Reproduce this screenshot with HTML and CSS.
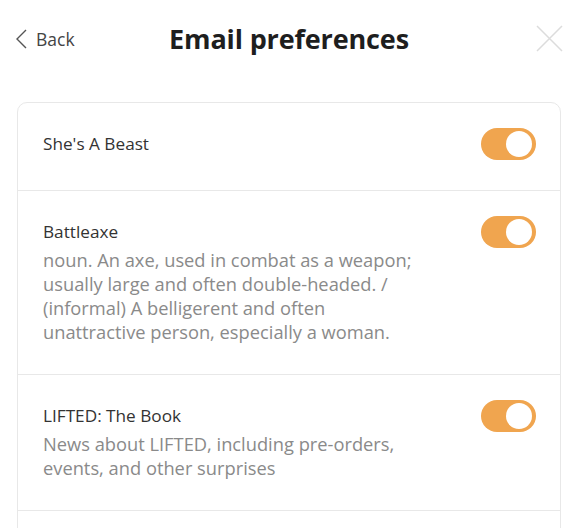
FILE: index.html
```html
<!DOCTYPE html>
<html>
<head>
<meta charset="utf-8">
<link rel="stylesheet" href="styles.css">
</head>
<body>
<div class="page">
  <header class="header">
    <a class="back">
      <svg class="chev" width="12" height="20" viewBox="0 0 12 20"><path d="M11 1 L2 10 L11 19" fill="none" stroke="#555" stroke-width="1.4"/></svg>
      <span>Back</span>
    </a>
    <h1 class="title">Email preferences</h1>
    <svg class="close" width="27" height="27" viewBox="0 0 27 27"><path d="M1 1 L26 26 M26 1 L1 26" fill="none" stroke="#dcdcdc" stroke-width="1.5"/></svg>
  </header>
  <div class="card">
    <div class="row">
      <div class="text">
        <div class="name">She's A Beast</div>
      </div>
      <span class="toggle"><span class="knob"></span></span>
    </div>
    <div class="row">
      <div class="text">
        <div class="name">Battleaxe</div>
        <div class="desc">noun. An axe, used in combat as a weapon; usually large and often double-headed. / (informal) A belligerent and often unattractive person, especially a woman.</div>
      </div>
      <span class="toggle"><span class="knob"></span></span>
    </div>
    <div class="row">
      <div class="text">
        <div class="name">LIFTED: The Book</div>
        <div class="desc">News about LIFTED, including pre-orders, events, and other surprises</div>
      </div>
      <span class="toggle"><span class="knob"></span></span>
    </div>
    <div class="row row-empty"></div>
  </div>
</div>
</body>
</html>
```

FILE: styles.css
```css
html, body {
  margin: 0;
  padding: 0;
  background: #fff;
  font-family: "Open Sans", "Noto Sans", sans-serif;
  overflow: hidden;
}
.page {
  padding: 0 17px;
}
.header {
  height: 76px;
  display: flex;
  align-items: center;
  justify-content: space-between;
  position: relative;
}
.back {
  display: flex;
  align-items: center;
  gap: 9px;
  color: #444;
  font-size: 17.5px;
  margin-left: -2px;
  margin-top: 2px;
}
.title {
  position: absolute;
  left: 0;
  right: 0;
  text-align: center;
  margin: 0;
  font-size: 27px;
  font-weight: 700;
  color: #1e1e1e;
  letter-spacing: -0.15px;
  pointer-events: none;
}
.close {
  margin-right: -2px;
}
.card {
  margin-top: 26px;
  border: 1px solid #e8e8e8;
  border-radius: 10px;
}
.row {
  display: flex;
  justify-content: space-between;
  align-items: flex-start;
  padding: 25px 24px 30px 25px;
  border-bottom: 1px solid #e8e8e8;
}
.row:last-child { border-bottom: none; }
.row-empty { height: 40px; }
.text {
  width: 380px;
}
.name {
  font-size: 17.2px;
  line-height: 32px;
  color: #333;
}
.desc {
  font-size: 18.3px;
  line-height: 24px;
  color: #8a8a8a;
}
.toggle {
  width: 55px;
  height: 32px;
  border-radius: 16px;
  background: #f0a54f;
  position: relative;
  flex-shrink: 0;
}
.knob {
  position: absolute;
  right: 4px;
  top: 3px;
  width: 26px;
  height: 26px;
  border-radius: 50%;
  background: #fff;
}
```
